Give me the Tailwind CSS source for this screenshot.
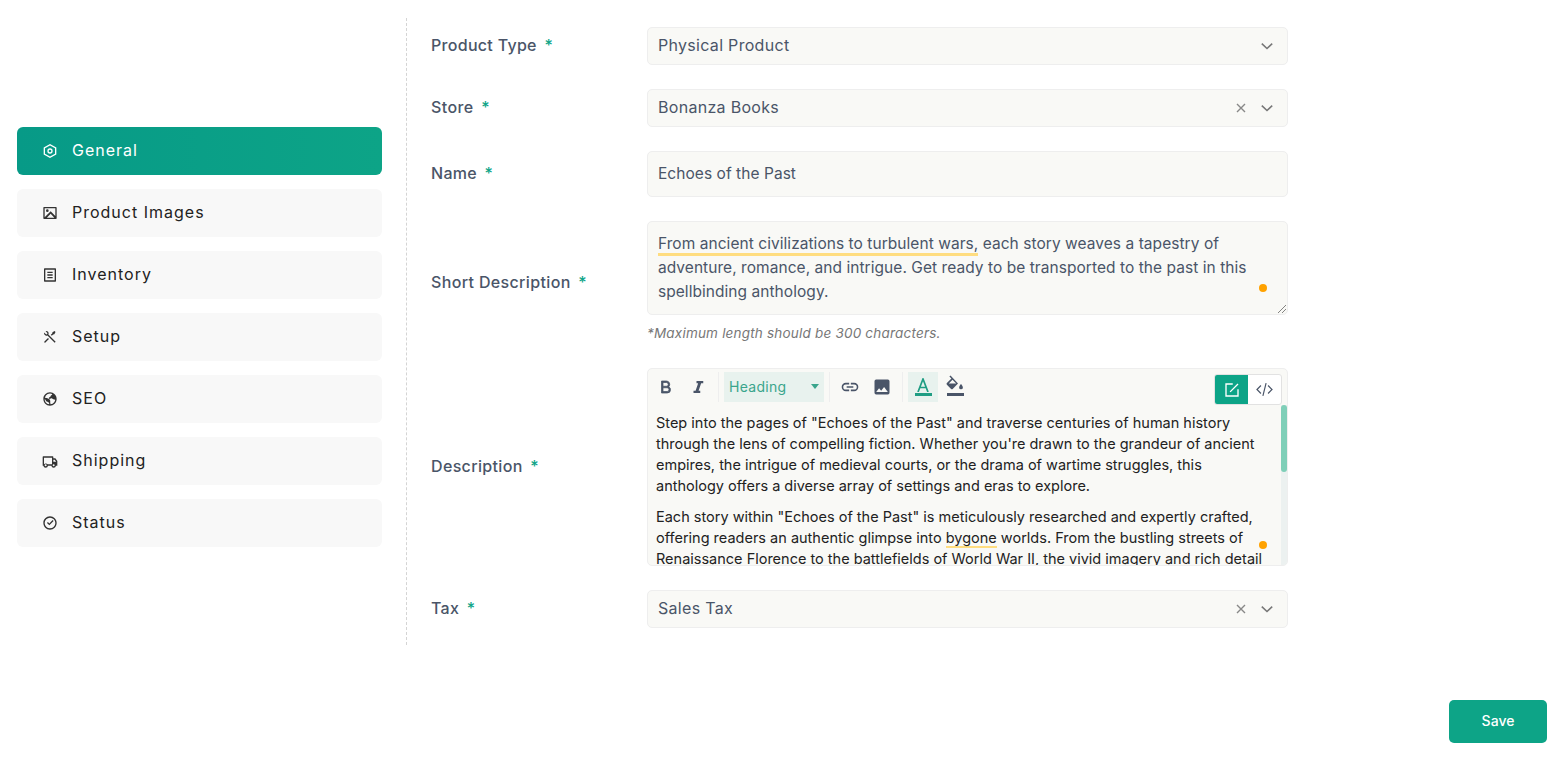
<!DOCTYPE html>
<html lang="en">
<head>
  <meta charset="UTF-8">
  <title>Product</title>
  <script src="https://cdn.jsdelivr.net/npm/@tailwindcss/browser@4"></script>
</head>
<body class="bg-white font-['Inter',sans-serif] overflow-hidden">
  <div class="w-[1563px] h-[759px] pl-[17px] pt-[18px]">
    <div class="flex">

      <!-- Sidebar -->
      <nav class="w-[365px] pt-[109px] flex flex-col gap-[14px] text-[16px] tracking-[1px] text-[#222]">
        <a class="h-[48px] rounded-[6px] flex items-center pl-[25px] gap-[14px] text-white bg-gradient-to-r from-[#079a87] to-[#0da487]">
          <svg class="w-[16px] h-[16px]" viewBox="0 0 24 24" fill="currentColor"><path d="M12 1.500l9.500 5.250v10.500L12 22.500l-9.500-5.250V6.750L12 1.500zm0 2.290L4.500 7.930v8.140L12 20.210l7.500-4.140V7.930L12 3.790zM12 16a4 4 0 110-8 4 4 0 010 8zm0-2a2 2 0 100-4 2 2 0 000 4z"/></svg>
          <span class="mb-[2px]">General</span>
        </a>
        <a class="h-[48px] rounded-[6px] flex items-center pl-[25px] gap-[14px] bg-[#f8f8f8]">
          <svg class="w-[16px] h-[16px] text-[#333]" viewBox="0 0 24 24" fill="currentColor"><path d="M3 3h18a1 1 0 011 1v16a1 1 0 01-1 1H3a1 1 0 01-1-1V4a1 1 0 011-1zm1 2v13.500l9-9 7 7V5H4zm0 14h14.500L13 13.300 7.300 19H4zM8 10.500a2 2 0 110-4 2 2 0 010 4z"/></svg>
          <span class="mb-[2px]">Product Images</span>
        </a>
        <a class="h-[48px] rounded-[6px] flex items-center pl-[25px] gap-[14px] bg-[#f8f8f8]">
          <svg class="w-[16px] h-[16px] text-[#333]" viewBox="0 0 24 24" fill="currentColor"><path d="M20 22H4a1 1 0 01-1-1V3a1 1 0 011-1h16a1 1 0 011 1v18a1 1 0 01-1 1zm-1-2V4H5v16h14zM8 7h8v2H8V7zm0 4h8v2H8v-2zm0 4h8v2H8v-2z"/></svg>
          <span class="mb-[2px]">Inventory</span>
        </a>
        <a class="h-[48px] rounded-[6px] flex items-center pl-[25px] gap-[14px] bg-[#f8f8f8]">
          <svg class="w-[16px] h-[16px] text-[#333]" viewBox="0 0 24 24" fill="currentColor"><path d="M5.330 3.270a3.500 3.500 0 014.250 4.900l10.900 10.900-1.410 1.420-10.900-10.900a3.500 3.500 0 01-4.900-4.260l2.240 2.240a1.500 1.500 0 102.120-2.120L5.330 3.270zm10.370 1.620l3.180-1.770 1.410 1.420-1.770 3.180-1.770.35-2.120 2.120-1.410-1.410 2.120-2.120.36-1.770zM9 13.500l1.410 1.410-5.300 5.310a1 1 0 01-1.500-1.320l.08-.1L9 13.500z"/></svg>
          <span class="mb-[2px]">Setup</span>
        </a>
        <a class="h-[48px] rounded-[6px] flex items-center pl-[25px] gap-[14px] bg-[#f8f8f8]">
          <svg class="w-[16px] h-[16px] text-[#333]" viewBox="0 0 24 24" fill="currentColor"><path d="M12 22C6.480 22 2 17.520 2 12S6.480 2 12 2s10 4.480 10 10-4.480 10-10 10zm-8-10a8 8 0 006.800 7.900c.3-1.300-.4-2.300-1.100-3-.8-.9-2.400-.7-3.300-1.700-.8-1-1.100-2-2.400-3.200zm14.300 4.900a8 8 0 001.600-3.600c-.9-.4-2-.3-2.900-.9-.9-.5-1.500-1.600-2.600-1.700-1.200-.1-1.600 1-2.700 1.200-.9.100-1.500-.9-1.300-1.700.2-.9 1.400-1 2.100-1.700.7-.7.6-1.500 1.500-2 .8-.4 1.400-1 1.400-2A8 8 0 004.300 10c3.800.3 6.300 1.300 7.500 3.200 1.200 2 .2 3.700.7 5 .3.8.3 1.500.3 1.800a8 8 0 005.500-3.100z"/></svg>
          <span class="mb-[2px]">SEO</span>
        </a>
        <a class="h-[48px] rounded-[6px] flex items-center pl-[25px] gap-[14px] bg-[#f8f8f8]">
          <svg class="w-[16px] h-[16px] text-[#333]" viewBox="0 0 24 24" fill="currentColor"><path d="M8.960 19a3.500 3.500 0 01-6.920 0H1V6a1 1 0 011-1h14a1 1 0 011 1v2h3l3 4.060V19h-2.040a3.500 3.500 0 01-6.920 0H8.960zM15 7H3v9.950a3.500 3.500 0 015.450 0h6.550V7zm2 6h4v-.28L19 10h-2v3zm.5 7a1.500 1.500 0 100-3 1.500 1.500 0 000 3zM7 18.500a1.500 1.500 0 10-3 0 1.500 1.500 0 003 0z"/></svg>
          <span class="mb-[2px]">Shipping</span>
        </a>
        <a class="h-[48px] rounded-[6px] flex items-center pl-[25px] gap-[14px] bg-[#f8f8f8]">
          <svg class="w-[16px] h-[16px] text-[#333]" viewBox="0 0 24 24" fill="currentColor"><path d="M12 22C6.480 22 2 17.520 2 12S6.480 2 12 2s10 4.480 10 10-4.480 10-10 10zm0-2a8 8 0 100-16 8 8 0 000 16zm-1-4.600l-3.540-3.530 1.420-1.420L11 12.570l4.950-4.950 1.410 1.420L11 15.400z"/></svg>
          <span class="mb-[2px]">Status</span>
        </a>
      </nav>

      <!-- Form -->
      <div class="ml-[24px] border-l border-dashed border-[#d4d4d4] pl-[24px] pt-[9px] pb-[17px] w-[882px] flex flex-col gap-[24px] text-[16px] tracking-[0.3px]">

        <div class="flex items-center">
          <label class="w-[216px] pb-[2px] font-medium text-[#4a5568] tracking-[0.3px]">Product Type <span class="text-[#0da487] ml-[3px]">*</span></label>
          <div class="w-[641px] h-[38px] rounded-[5px] border border-[#eeeeee] bg-[#f9f9f6] pl-[10px] pr-[13px] flex items-center text-[#4a5568]">
            <span class="flex-1 mb-[2px]">Physical Product</span>
            <svg class="w-[14px] h-[14px] text-[#777]" viewBox="0 0 14 14" fill="none" stroke="currentColor" stroke-width="1.6"><path d="M1.800 4.700L7 9.500l5.200-4.800"/></svg>
          </div>
        </div>

        <div class="flex items-center">
          <label class="w-[216px] pb-[2px] font-medium text-[#4a5568] tracking-[0.4px]">Store <span class="text-[#0da487] ml-[3px]">*</span></label>
          <div class="w-[641px] h-[38px] rounded-[5px] border border-[#eeeeee] bg-[#f9f9f6] pl-[10px] pr-[13px] flex items-center text-[#4a5568]">
            <span class="flex-1 mb-[2px]">Bonanza Books</span>
            <svg class="w-[10px] h-[10px] mr-[14px] text-[#888]" viewBox="0 0 10 10" fill="none" stroke="currentColor" stroke-width="1.4"><path d="M1 1l8 8M9 1l-8 8"/></svg>
            <svg class="w-[14px] h-[14px] text-[#777]" viewBox="0 0 14 14" fill="none" stroke="currentColor" stroke-width="1.6"><path d="M1.800 4.700L7 9.500l5.200-4.800"/></svg>
          </div>
        </div>

        <div class="flex items-center">
          <label class="w-[216px] pb-[2px] font-medium text-[#4a5568] tracking-[0.3px]">Name <span class="text-[#0da487] ml-[3px]">*</span></label>
          <div class="w-[641px] h-[46px] rounded-[5px] border border-[#eeeeee] bg-[#f9f9f6] pl-[10px] flex items-center text-[15.5px] tracking-[0.05px] text-[#4a5568]">Echoes of the Past</div>
        </div>

        <div class="flex items-center">
          <label class="w-[216px] pb-[2px] font-medium text-[#4a5568] tracking-[0.35px]">Short Description <span class="text-[#0da487] ml-[3px]">*</span></label>
          <div class="w-[641px]">
            <div class="relative h-[94px] rounded-[5px] border border-[#eeeeee] bg-[#f9f9f6] pl-[10px] pr-[20px] pt-[10px] leading-[24px] text-[15.5px] tracking-[0.05px] text-[#4a5568]">
              <span class="border-b-[3px] border-[#ffdd80]">From ancient civilizations to turbulent wars,</span> each story weaves a tapestry of adventure, romance, and intrigue. Get ready to be transported to the past in this spellbinding anthology.
              <span class="absolute left-[611px] top-[62px] w-[8px] h-[8px] rounded-full bg-[#ffa200]"></span>
              <svg class="absolute right-[1px] bottom-[1px] w-[8px] h-[8px] text-[#666]" viewBox="0 0 8 8" fill="none" stroke="currentColor" stroke-width="0.8"><path d="M0 8l8-8M4 8l4-4"/></svg>
            </div>
            <p class="mt-[8px] mb-[1px] text-[13.5px] tracking-[0.2px] italic text-[#777] leading-[20px]">*Maximum length should be 300 characters.</p>
          </div>
        </div>

        <div class="flex items-center">
          <label class="w-[216px] pb-[2px] font-medium text-[#4a5568] tracking-[0.35px]">Description <span class="text-[#0da487] ml-[3px]">*</span></label>
          <div class="relative w-[641px] h-[198px] rounded-[5px] border border-[#eeeeee] bg-[#f9f9f6] overflow-hidden">

            <!-- Toolbar -->
            <div class="h-[36px] pt-[3px] flex items-start text-[#4a5568]">
              <div class="w-[32px] h-[30px] ml-[2px] flex items-center justify-center">
                <svg class="w-[18px] h-[18px]" viewBox="0 0 24 24" fill="currentColor"><path d="M8 11h4.500a2.500 2.500 0 000-5H8v5zm10 4.500a4.500 4.500 0 01-4.500 4.500H6V4h6.500a4.500 4.500 0 013.260 7.600A4.500 4.500 0 0118 15.500zM8 13v5h5.500a2.500 2.500 0 000-5H8z" stroke="currentColor"/></svg>
              </div>
              <div class="w-[32px] h-[30px] flex items-center justify-center">
                <svg class="w-[18px] h-[18px]" viewBox="0 0 24 24" fill="currentColor"><path d="M19 4h-9v3h2.200l-3.400 10H6v3h9v-3h-2.200l3.400-10H19V4z"/></svg>
              </div>
              <div class="w-px h-[30px] bg-[#eeeeee] ml-[4px] mr-[5px]"></div>
              <div class="w-[100px] h-[30px] bg-[#e8f2ee] pl-[5px] pr-[4px] flex items-center text-[14px] tracking-[0.3px] text-[#3aa58c]">
                <span class="flex-1 mb-[1px]">Heading</span>
                <svg class="w-[10px] h-[6px]" viewBox="0 0 10 6" fill="currentColor"><path d="M1 0h8L5 5z"/></svg>
              </div>
              <div class="w-px h-[30px] bg-[#eeeeee] ml-[5px] mr-[4px]"></div>
              <div class="w-[32px] h-[30px] flex items-center justify-center">
                <svg class="w-[20px] h-[20px]" viewBox="0 0 24 24" fill="currentColor"><path d="M3.900 12A3.100 3.100 0 017 8.900h4V7H7a5 5 0 000 10h4v-1.900H7A3.100 3.100 0 013.900 12zM8 13h8v-2H8v2zm9-6h-4v1.900h4a3.100 3.100 0 010 6.200h-4V17h4a5 5 0 000-10z"/></svg>
              </div>
              <div class="w-[32px] h-[30px] flex items-center justify-center">
                <svg class="w-[20px] h-[20px]" viewBox="0 0 24 24" fill="currentColor"><path d="M21 19V5a2 2 0 00-2-2H5a2 2 0 00-2 2v14a2 2 0 002 2h14a2 2 0 002-2zM8.500 13.500l2.500 3 3.500-4.500 4.500 6H5l3.500-4.500z"/></svg>
              </div>
              <div class="w-px h-[30px] bg-[#eeeeee] ml-[4px] mr-[5px]"></div>
              <div class="w-[30px] h-[30px] bg-[#e8f2ee] flex flex-col items-center pt-[6px] text-[#1f9d83]">
                <svg class="w-[12px] h-[14px]" viewBox="0 0 12 14" fill="none" stroke="currentColor" stroke-width="1.700"><path d="M1 14L6 1l5 13M2.800 9.500h6.400"/></svg>
                <div class="w-[17px] h-[3px] mt-[1px] bg-current"></div>
              </div>
              <div class="w-[34px] h-[30px] flex flex-col items-center pt-[3px]">
                <svg class="w-[18px] h-[17px]" viewBox="0 0 18 16" fill="currentColor"><path d="M4.500 0L3.400 1.100l2 2L.9 7.600a1.100 1.100 0 000 1.600l4.200 4.200a1.100 1.100 0 001.600 0l5.300-5.300L4.500 0zM6.500 4.200l3.700 3.800H2.800l3.700-3.800zM15 8.600s-1.900 2-1.900 3.300a1.900 1.900 0 003.800 0C16.900 10.600 15 8.600 15 8.600z"/></svg>
                <div class="w-[17px] h-[3px] mt-[1px] bg-[#4a5568]"></div>
              </div>
            </div>

            <!-- Source / editor switch -->
            <div class="absolute left-[566px] top-[5px] w-[68px] h-[31px] rounded-[3px] border border-[#e2e2e2] bg-white flex overflow-hidden">
              <div class="w-[33px] bg-[#0da487] flex items-center justify-center">
                <svg class="w-[18px] h-[18px] text-white" viewBox="0 0 24 24" fill="none" stroke="currentColor" stroke-width="1.800"><path d="M13 4H4v16h16v-9M9.500 14.500L20 4"/></svg>
              </div>
              <div class="flex-1 flex items-center justify-center">
                <svg class="w-[19px] h-[19px] text-[#4a5568]" viewBox="0 0 24 24" fill="none" stroke="currentColor" stroke-width="1.500"><path d="M7.500 7L2.500 12l5 5M16.500 7l5 5-5 5M14 4l-4 16"/></svg>
              </div>
            </div>

            <!-- Content -->
            <div class="pl-[8px] pr-[18px] pt-[7px] text-[14.5px] leading-[21px] tracking-normal text-[#222]">
              <p class="mb-[10px]">Step into the pages of "Echoes of the Past" and traverse centuries of human history through the lens of compelling fiction. Whether you're drawn to the grandeur of ancient empires, the intrigue of medieval courts, or the drama of wartime struggles, this anthology offers a diverse array of settings and eras to explore.</p>
              <p>Each story within "Echoes of the Past" is meticulously researched and expertly crafted, offering readers an authentic glimpse into <span class="border-b-2 border-[#ffdd80]">bygone</span> worlds. From the bustling streets of Renaissance Florence to the battlefields of World War II, the vivid imagery and rich detail</p>
            </div>

            <span class="absolute left-[611px] top-[172px] w-[8px] h-[8px] rounded-full bg-[#ffa200]"></span>

            <!-- Scrollbar -->
            <div class="absolute right-0 top-[36px] bottom-0 w-[6px] bg-[#ecf1f0]">
              <div class="w-full h-[67px] rounded-[3px] bg-[#7fcfb8]"></div>
            </div>
          </div>
        </div>

        <div class="flex items-center">
          <label class="w-[216px] pb-[2px] font-medium text-[#4a5568] tracking-[0.3px]">Tax <span class="text-[#0da487] ml-[3px]">*</span></label>
          <div class="w-[641px] h-[38px] rounded-[5px] border border-[#eeeeee] bg-[#f9f9f6] pl-[10px] pr-[13px] flex items-center text-[#4a5568]">
            <span class="flex-1 mb-[2px]">Sales Tax</span>
            <svg class="w-[10px] h-[10px] mr-[14px] text-[#888]" viewBox="0 0 10 10" fill="none" stroke="currentColor" stroke-width="1.4"><path d="M1 1l8 8M9 1l-8 8"/></svg>
            <svg class="w-[14px] h-[14px] text-[#777]" viewBox="0 0 14 14" fill="none" stroke="currentColor" stroke-width="1.6"><path d="M1.800 4.700L7 9.500l5.200-4.800"/></svg>
          </div>
        </div>

      </div>
    </div>

    <div class="flex justify-end pr-[16px] mt-[55px]">
      <button class="w-[98px] h-[43px] pb-[2px] rounded-[5px] bg-[#0da487] text-white text-[14px] font-medium">Save</button>
    </div>
  </div>
</body>
</html>
